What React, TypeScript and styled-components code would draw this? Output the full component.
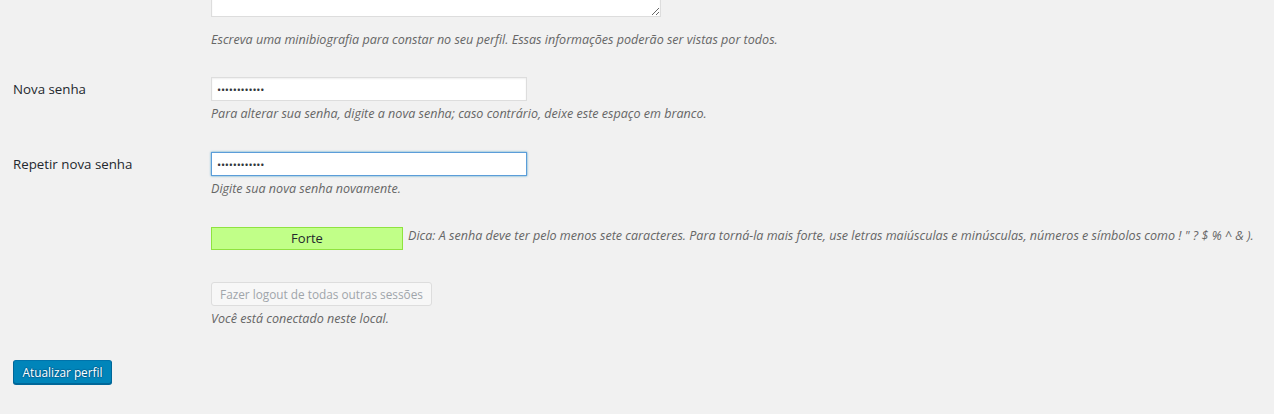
import React from "react";
import styled, { createGlobalStyle, css } from "styled-components";

const GlobalStyle = createGlobalStyle`
  html, body {
    margin: 0;
    padding: 0;
    background: #f1f1f1;
  }
  body {
    font-family: "Open Sans", "Noto Sans", "Liberation Sans", sans-serif;
    font-size: 13px;
    color: #444;
    overflow: hidden;
  }
`;

const Page = styled.div`
  padding: 0 0 0 13px;
  height: 414px;
  overflow: hidden;
`;

const Row = styled.div<{ $mt: number }>`
  display: grid;
  grid-template-columns: 198px 1fr;
  align-items: start;
  margin-top: ${(p) => p.$mt}px;
`;

const Label = styled.label`
  font-size: 13.3px;
  line-height: 24px;
  color: #23282d;
  font-weight: 400;
`;

const Field = styled.div`
  display: flex;
  flex-direction: column;
  align-items: flex-start;
  min-width: 0;
`;

const TextArea = styled.textarea`
  box-sizing: border-box;
  width: 450px;
  height: 96px;
  margin-top: -79px;
  background: #fff;
  border: 1px solid #ddd;
  box-shadow: inset 0 1px 2px rgba(0, 0, 0, 0.07);
  font-family: inherit;
  font-size: 14px;
  display: block;
  resize: both;
  outline: none;
`;

const Description = styled.p<{ $mt: number }>`
  margin: ${(p) => p.$mt}px 0 0;
  font-size: 12.55px;
  line-height: 20px;
  font-style: italic;
  color: #666;
  white-space: nowrap;
`;

const PasswordInput = styled.input<{ $focused?: boolean }>`
  box-sizing: border-box;
  width: 316px;
  height: 24px;
  padding: 0 5px;
  margin: 0;
  background: #fff;
  border: 1px solid #ddd;
  box-shadow: inset 0 1px 2px rgba(0, 0, 0, 0.07);
  font-family: "Open Sans", "Noto Sans", sans-serif;
  font-size: 11px;
  letter-spacing: -0.2px;
  color: #32373c;
  caret-color: #000;
  outline: none;
  display: block;
  ${(p) =>
    p.$focused &&
    css`
      border-color: #5b9dd9;
      box-shadow: 0 0 2px rgba(30, 140, 190, 0.8);
    `}
  &:focus {
    border-color: #5b9dd9;
    box-shadow: 0 0 2px rgba(30, 140, 190, 0.8);
  }
`;

const StrengthLine = styled.div`
  display: flex;
  align-items: flex-start;
  gap: 5px;
`;

const Meter = styled.div`
  box-sizing: border-box;
  width: 192px;
  height: 23px;
  background: #c1ff88;
  border: 1px solid #8fe33f;
  color: #23282d;
  font-size: 13px;
  line-height: 21px;
  text-align: center;
`;

const Hint = styled.p`
  margin: -1px 0 0;
  font-size: 12.55px;
  line-height: 20px;
  font-style: italic;
  color: #666;
  white-space: nowrap;
`;

const SecondaryButton = styled.button`
  box-sizing: border-box;
  height: 24px;
  width: 221px;
  padding: 0;
  margin: 0;
  background: #f7f7f7;
  border: 1px solid #ddd;
  border-radius: 3px;
  color: #a0a5aa;
  font-family: inherit;
  font-size: 11.8px;
  line-height: 22px;
  text-align: center;
  white-space: nowrap;
  cursor: default;
`;

const PrimaryButton = styled.button`
  box-sizing: border-box;
  height: 24px;
  width: 99px;
  padding: 0;
  margin: 0;
  background: #0085ba;
  border: 1px solid;
  border-color: #0073aa #006799 #006799;
  border-radius: 3px;
  box-shadow: 0 1px 0 #006799;
  color: #fff;
  text-shadow: 0 -1px 1px #006799, 1px 0 1px #006799, 0 1px 1px #006799, -1px 0 1px #006799;
  font-family: inherit;
  font-size: 11.8px;
  line-height: 22px;
  text-align: center;
  white-space: nowrap;
  cursor: pointer;
`;

const Spacer = styled.div``;

export default function App() {
  return (
    <>
      <GlobalStyle />
      <Page>
        <Row $mt={0}>
          <Spacer />
          <Field>
            <TextArea defaultValue="" />
            <Description $mt={13}>
              Escreva uma minibiografia para constar no seu perfil. Essas informações poderão ser vistas por todos.
            </Description>
          </Field>
        </Row>

        <Row $mt={27}>
          <Label htmlFor="pass1">Nova senha</Label>
          <Field>
            <PasswordInput id="pass1" type="password" defaultValue="abcdefghijkl" readOnly />
            <Description $mt={3}>
              Para alterar sua senha, digite a nova senha; caso contrário, deixe este espaço em branco.
            </Description>
          </Field>
        </Row>

        <Row $mt={28}>
          <Label htmlFor="pass2">Repetir nova senha</Label>
          <Field>
            <PasswordInput id="pass2" type="password" defaultValue="abcdefghijkl" $focused autoFocus />
            <Description $mt={3}>Digite sua nova senha novamente.</Description>
          </Field>
        </Row>

        <Row $mt={28}>
          <Spacer />
          <StrengthLine>
            <Meter>Forte</Meter>
            <Hint>
              Dica: A senha deve ter pelo menos sete caracteres. Para torná-la mais forte, use letras maiúsculas e minúsculas, números e símbolos como ! " ? $ % ^ &amp; ).
            </Hint>
          </StrengthLine>
        </Row>

        <Row $mt={32}>
          <Spacer />
          <Field>
            <SecondaryButton type="button" disabled>
              Fazer logout de todas outras sessões
            </SecondaryButton>
            <Description $mt={3}>Você está conectado neste local.</Description>
          </Field>
        </Row>

        <Row $mt={31}>
          <Field>
            <PrimaryButton type="button">Atualizar perfil</PrimaryButton>
          </Field>
        </Row>
      </Page>
    </>
  );
}
